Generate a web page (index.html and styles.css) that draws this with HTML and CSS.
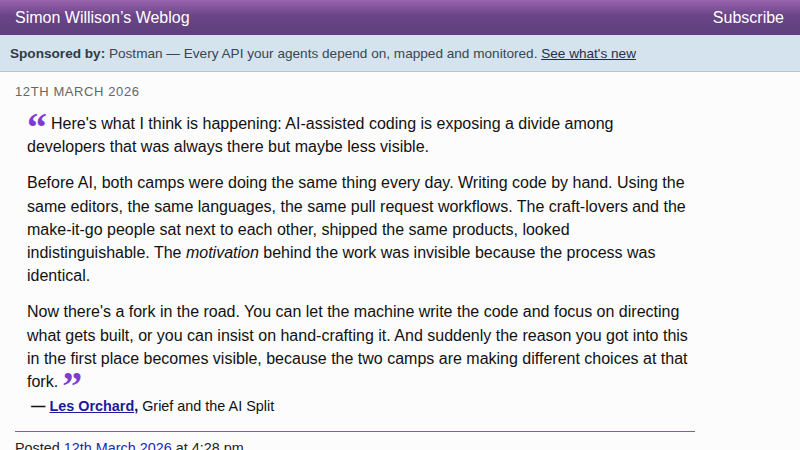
FILE: index.html
```html
<!DOCTYPE html>
<html>
<head>
<meta charset="utf-8">
<link rel="stylesheet" href="styles.css">
</head>
<body>
<header class="top">
  <a class="site-title" href="#">Simon Willison’s Weblog</a>
  <a class="subscribe" href="#">Subscribe</a>
</header>
<div class="sponsor">
  <strong>Sponsored by:</strong> Postman — Every API your agents depend on, mapped and monitored. <a href="#">See what's new</a>
</div>
<main class="content">
  <div class="date">12th March 2026</div>
  <blockquote class="quote">
    <p><span class="qmark open">“</span>Here's what I think is happening: AI-assisted coding is exposing a divide among developers that was always there but maybe less visible.</p>
    <p>Before AI, both camps were doing the same thing every day. Writing code by hand. Using the same editors, the same languages, the same pull request workflows. The craft-lovers and the make-it-go people sat next to each other, shipped the same products, looked indistinguishable. The <em>motivation</em> behind the work was invisible because the process was identical.</p>
    <p>Now there's a fork in the road. You can let the machine write the code and focus on directing what gets built, or you can insist on hand-crafting it. And suddenly the reason you got into this in the first place becomes visible, because the two camps are making different choices at that fork.<span class="qmark close">”</span></p>
  </blockquote>
  <p class="cite"><strong>—</strong> <strong><a href="#">Les Orchard</a>,</strong> Grief and the AI Split</p>
  <hr class="rule">
  <p class="posted">Posted <a href="#">12th March 2026</a> at 4:28 pm</p>
</main>
</body>
</html>
```
FILE: styles.css
```css
html, body {
  margin: 0;
  padding: 0;
}
body {
  background: #fdfcfd;
  font-family: "Liberation Sans", Arial, sans-serif;
  color: #111;
}
.top {
  height: 35px;
  display: flex;
  align-items: center;
  justify-content: space-between;
  padding: 0 16px 0 15px;
  background: linear-gradient(to bottom, #9a64ae 0%, #6a4487 45%, #5f3f7d 100%);
}
.top a {
  color: #fff;
  text-decoration: none;
  font-size: 16px;
}
.sponsor {
  background: #d5e3ee;
  border-bottom: 1px solid #b7c5d2;
  padding: 0 10px;
  height: 36px;
  display: flex;
  align-items: center;
  font-size: 13.6px;
  color: #3a4650;
  white-space: pre;
}
.sponsor strong {
  color: #2e3a45;
}
.sponsor a {
  color: #2a2f4a;
  text-decoration: underline;
  text-decoration-color: #1a237e;
}
.content {
  width: 680px;
  padding: 0 15px;
}
.date {
  margin-top: 12px;
  font-size: 13px;
  letter-spacing: 0.6px;
  text-transform: uppercase;
  color: #666;
  line-height: 16px;
}
.quote {
  margin: 12px 4px 0 12px;
  padding: 0;
}
.quote p {
  margin: 0 0 13px 0;
  font-size: 16px;
  line-height: 23.2px;
}
.quote p:last-child {
  margin-bottom: 0;
}
.qmark {
  font-family: "Liberation Serif", Georgia, serif;
  font-weight: bold;
  font-size: 40px;
  line-height: 0;
  color: #7d3bd2;
  vertical-align: -12px;
}
.qmark.open {
  margin-right: 4px;
}
.qmark.close {
  margin-left: 4px;
}
.cite {
  margin: 3px 0 0 16px;
  font-size: 14.4px;
  line-height: 20px;
  color: #111;
}
.cite a {
  color: #1a1a9a;
  text-decoration: underline;
}
.rule {
  border: 0;
  border-top: 1px solid #8b5a9b;
  margin: 15px 0 0 0;
  height: 0;
}
.posted {
  margin: 5px 0 0 0;
  font-size: 14.4px;
  line-height: 23px;
  color: #222;
}
.posted a {
  color: #1a2ab0;
  text-decoration: none;
}
```
